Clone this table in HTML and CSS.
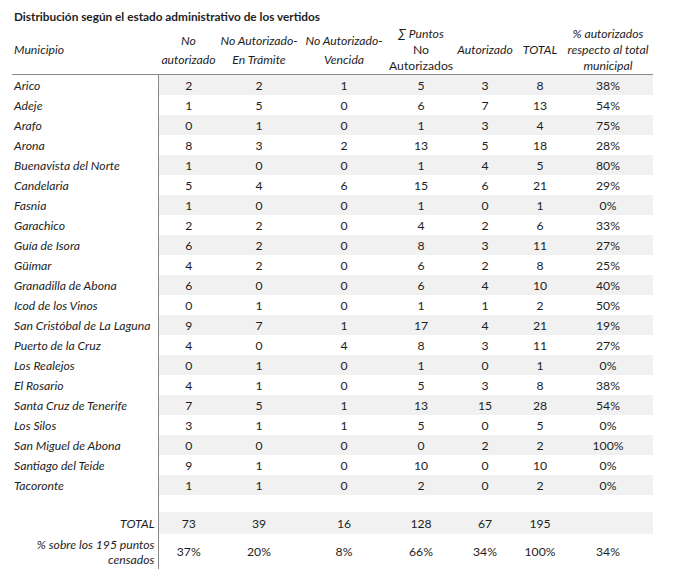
FILE: index.html
```html
<!DOCTYPE html>
<html lang="es">
<head>
<meta charset="utf-8">
<title>Distribución según el estado administrativo de los vertidos</title>
<link rel="stylesheet" href="styles.css">
</head>
<body>
<div class="page">
  <h1 class="title">Distribución según el estado administrativo de los vertidos</h1>
  <table class="tbl">
    <colgroup>
      <col class="c-mun"><col class="c1"><col class="c2"><col class="c3"><col class="c4"><col class="c5"><col class="c6"><col class="c7">
    </colgroup>
    <thead>
      <tr>
        <th class="h-mun">Municipio</th>
        <th class="h2l">No<br>autorizado</th>
        <th class="h2l">No Autorizado-<br>En Trámite</th>
        <th class="h2l">No Autorizado-<br>Vencida</th>
        <th class="h3l">∑ Puntos<br><span class="up">No</span><br><span class="up">Autorizados</span></th>
        <th>Autorizado</th>
        <th>TOTAL</th>
        <th class="h3l">% autorizados<br>respecto al total<br>municipal</th>
      </tr>
    </thead>
    <tbody>
      <tr class="s"><td class="mun">Arico</td><td>2</td><td>2</td><td>1</td><td>5</td><td>3</td><td>8</td><td>38%</td></tr>
      <tr><td class="mun">Adeje</td><td>1</td><td>5</td><td>0</td><td>6</td><td>7</td><td>13</td><td>54%</td></tr>
      <tr class="s"><td class="mun">Arafo</td><td>0</td><td>1</td><td>0</td><td>1</td><td>3</td><td>4</td><td>75%</td></tr>
      <tr><td class="mun">Arona</td><td>8</td><td>3</td><td>2</td><td>13</td><td>5</td><td>18</td><td>28%</td></tr>
      <tr class="s"><td class="mun">Buenavista del Norte</td><td>1</td><td>0</td><td>0</td><td>1</td><td>4</td><td>5</td><td>80%</td></tr>
      <tr><td class="mun">Candelaria</td><td>5</td><td>4</td><td>6</td><td>15</td><td>6</td><td>21</td><td>29%</td></tr>
      <tr class="s"><td class="mun">Fasnia</td><td>1</td><td>0</td><td>0</td><td>1</td><td>0</td><td>1</td><td>0%</td></tr>
      <tr><td class="mun">Garachico</td><td>2</td><td>2</td><td>0</td><td>4</td><td>2</td><td>6</td><td>33%</td></tr>
      <tr class="s"><td class="mun">Guía de Isora</td><td>6</td><td>2</td><td>0</td><td>8</td><td>3</td><td>11</td><td>27%</td></tr>
      <tr><td class="mun">Güímar</td><td>4</td><td>2</td><td>0</td><td>6</td><td>2</td><td>8</td><td>25%</td></tr>
      <tr class="s"><td class="mun">Granadilla de Abona</td><td>6</td><td>0</td><td>0</td><td>6</td><td>4</td><td>10</td><td>40%</td></tr>
      <tr><td class="mun">Icod de los Vinos</td><td>0</td><td>1</td><td>0</td><td>1</td><td>1</td><td>2</td><td>50%</td></tr>
      <tr class="s"><td class="mun">San Cristóbal de La Laguna</td><td>9</td><td>7</td><td>1</td><td>17</td><td>4</td><td>21</td><td>19%</td></tr>
      <tr><td class="mun">Puerto de la Cruz</td><td>4</td><td>0</td><td>4</td><td>8</td><td>3</td><td>11</td><td>27%</td></tr>
      <tr class="s"><td class="mun">Los Realejos</td><td>0</td><td>1</td><td>0</td><td>1</td><td>0</td><td>1</td><td>0%</td></tr>
      <tr><td class="mun">El Rosario</td><td>4</td><td>1</td><td>0</td><td>5</td><td>3</td><td>8</td><td>38%</td></tr>
      <tr class="s"><td class="mun">Santa Cruz de Tenerife</td><td>7</td><td>5</td><td>1</td><td>13</td><td>15</td><td>28</td><td>54%</td></tr>
      <tr><td class="mun">Los Silos</td><td>3</td><td>1</td><td>1</td><td>5</td><td>0</td><td>5</td><td>0%</td></tr>
      <tr class="s"><td class="mun">San Miguel de Abona</td><td>0</td><td>0</td><td>0</td><td>0</td><td>2</td><td>2</td><td>100%</td></tr>
      <tr><td class="mun">Santiago del Teide</td><td>9</td><td>1</td><td>0</td><td>10</td><td>0</td><td>10</td><td>0%</td></tr>
      <tr class="s"><td class="mun">Tacoronte</td><td>1</td><td>1</td><td>0</td><td>2</td><td>0</td><td>2</td><td>0%</td></tr>
      <tr class="blank"><td class="mun"></td><td></td><td></td><td></td><td></td><td></td><td></td><td></td></tr>
      <tr class="s tot"><td class="mun lbl">TOTAL</td><td>73</td><td>39</td><td>16</td><td>128</td><td>67</td><td>195</td><td></td></tr>
      <tr class="pct"><td class="mun lbl">% sobre los 195 puntos<br>censados</td><td>37%</td><td>20%</td><td>8%</td><td>66%</td><td>34%</td><td>100%</td><td>34%</td></tr>
    </tbody>
  </table>
</div>
</body>
</html>
```

FILE: styles.css
```css
html, body {
  margin: 0;
  padding: 0;
  background: #ffffff;
}

body {
  font-family: Lato, "Open Sans", "Liberation Sans", sans-serif;
  color: #1e1e1e;
}

.page {
  padding: 8px 0 0 12px;
}

.title {
  margin: 0 0 0 2px;
  font-size: 11.8px;
  font-weight: 700;
  line-height: 17px;
}

.tbl {
  margin-top: 1px;
  border-collapse: collapse;
  table-layout: fixed;
  width: 641px;
  font-size: 12.2px;
}

.c-mun { width: 146px; }
.c1 { width: 61px; }
.c2 { width: 80px; }
.c3 { width: 90px; }
.c4 { width: 64px; }
.c5 { width: 64px; }
.c6 { width: 46px; }
.c7 { width: 90px; }

.tbl th {
  font-weight: 400;
  font-style: italic;
  text-align: center;
  vertical-align: middle;
  padding: 0;
  height: 48px;
  line-height: 16px;
  border-bottom: 1px solid #8a8a8a;
  white-space: nowrap;
}

.tbl th.h-mun {
  text-align: left;
  padding-left: 2px;
}

.tbl th.h2l {
  line-height: 19px;
}

.tbl th.h3l {
  line-height: 16px;
}

.up {
  font-style: normal;
}

.tbl td {
  padding: 0;
  height: 20px;
  text-align: center;
  vertical-align: middle;
  line-height: 15px;
  white-space: nowrap;
}

.tbl td.mun {
  text-align: left;
  font-style: italic;
  padding-left: 2px;
  border-right: 1px solid #8a8a8a;
  background: #ffffff;
}

.tbl tr.s td {
  background: #f1f1f1;
}

.tbl tr.s td.mun {
  background: #ffffff;
}

.tbl tr.blank td {
  height: 17px;
}

.tbl tr.tot td {
  height: 22px;
}

.tbl tr.pct td {
  height: 35px;
}

.tbl td.lbl {
  text-align: right;
  padding-right: 3px;
  line-height: 15px;
}
```
